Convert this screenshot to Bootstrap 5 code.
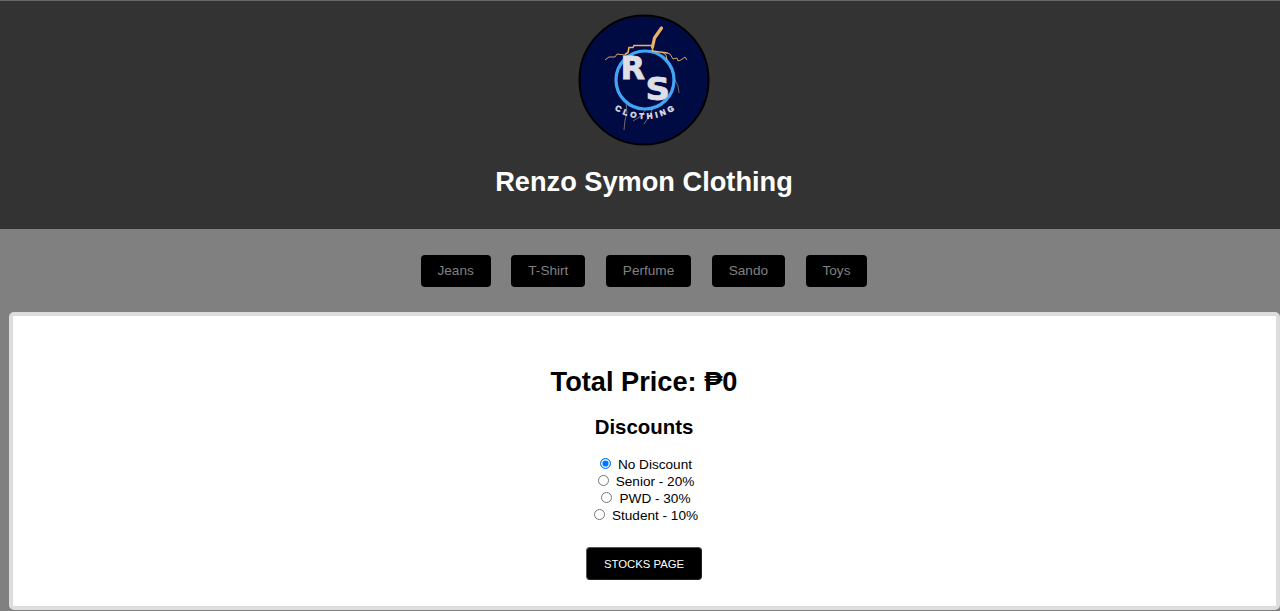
<!DOCTYPE html>
<html lang="en">
<head>
<meta charset="utf-8">
<meta name="viewport" content="width=device-width, initial-scale=1">
<title>Renzo Symon Clothing</title>
<link href="https://cdn.jsdelivr.net/npm/bootstrap@5.3.0/dist/css/bootstrap.min.css" rel="stylesheet">
<style>
body { background: #808080; color: #000; font-family: "Liberation Sans", Arial, sans-serif; font-size: 13.6px; line-height: 17px; }
.shop-header { background: #333; height: 229px; padding: 13px 0 0 8px; border-top: 1px solid #686868; }
.logo { width: 132px; height: 132px; }
.shop-title { font-size: 27.2px; line-height: 32px; margin: 20px 0 0; font-weight: 700; color: #fff; }
.shop-nav { padding: 26px 0 25px 8px; gap: 20.5px; }
.shop-nav .btn { --bs-btn-bg: #000; --bs-btn-color: #808080; --bs-btn-hover-bg: #222; --bs-btn-hover-color: #aaa; --bs-btn-border-width: 0; --bs-btn-border-radius: 4px; --bs-btn-font-size: 13.6px; --bs-btn-padding-x: 17px; --bs-btn-padding-y: 0; line-height: 32px; }
.panel { margin-left: 9px; height: 298px; background: #fff; border: 4px solid #ddd; border-radius: 5px; padding: 50px 1px 0 0; }
.total { font-size: 27.2px; line-height: 32px; font-weight: 700; margin: 0; }
.discounts { font-size: 20.4px; line-height: 24px; font-weight: 700; margin: 17px 0 17px; }
.choice { height: 17px; gap: 7px; padding-left: 4px; }
.choice .form-check-input { width: 11px; height: 11px; margin: 0 0 2px; border-color: #767676; background-image: none; }
.choice .form-check-input:checked { border-color: #0075ff; background: #0075ff; box-shadow: inset 0 0 0 1.4px #fff; }
.stocks { --bs-btn-bg: #000; --bs-btn-color: #fff; --bs-btn-hover-bg: #222; --bs-btn-hover-color: #fff; --bs-btn-border-radius: 4px; --bs-btn-font-size: 11.33px; --bs-btn-padding-x: 0; --bs-btn-padding-y: 0; width: 116px; height: 33px; margin-top: 23px; border-color: #555 #222 #222 #555; line-height: 30px; }
</style>
</head>
<body class="overflow-hidden">
<header class="shop-header d-flex flex-column align-items-center">
  <svg class="logo" viewBox="0 0 132 132" role="img" aria-label="RS Clothing">
    <circle cx="66" cy="66" r="64.5" fill="#010b43" stroke="#000" stroke-width="2"/>
    <g fill="none" stroke="#8b8178" stroke-width=".8">
      <path d="M48 88l1 11-2 7-1 10M68 95l-5 7-8 5M75 94l-3 7-6 9M97 66l3 6 1 7"/>
    </g>
    <circle cx="67" cy="66" r="29" fill="none" stroke="#44a5f5" stroke-width="3.200"/>
    <g fill="none" stroke="#edb066">
      <path d="M83.500 14l-7 10-2 9" stroke-width="3.200" stroke-linecap="round"/>
      <path d="M74.500 31v6l7 1 8 1M74 31.500H56l-1 2h-4l-1 5-3 2" stroke-width="1.600"/>
      <path d="M47 41l-8-1-2 3h-6l-4 3M89 39l3 1 3 5 4-1 1 3 3-1 4-3 2 3M84 38l4 3 1 5" stroke-width=".9"/>
    </g>
    <g fill="#dedfe6" font-weight="700">
      <g font-family="DejaVu Sans, sans-serif" stroke="#dedfe6" stroke-width=".8">
        <text x="42.500" y="65" font-size="32" textLength="24.500" lengthAdjust="spacingAndGlyphs">R</text>
        <text x="67.500" y="85.500" font-size="32" textLength="24.500" lengthAdjust="spacingAndGlyphs">S</text>
      </g>
      <path id="arc" d="M36.500 95.500Q67 115 99 94.500" fill="none"/>
      <text font-family="Liberation Sans, Arial, sans-serif" font-size="8" stroke="#dedfe6" stroke-width=".5"><textPath href="#arc" textLength="64">CLOTHING</textPath></text>
    </g>
  </svg>
  <h1 class="shop-title">Renzo Symon Clothing</h1>
</header>
<nav class="shop-nav d-flex justify-content-center">
  <a class="btn" href="#">Jeans</a>
  <a class="btn" href="#">T-Shirt</a>
  <a class="btn" href="#">Perfume</a>
  <a class="btn" href="#">Sando</a>
  <a class="btn" href="#">Toys</a>
</nav>
<main class="panel d-flex flex-column align-items-center">
  <h2 class="total">Total Price: ₱0</h2>
  <h3 class="discounts">Discounts</h3>
  <label class="choice d-flex align-items-center"><input class="form-check-input" type="radio" name="discount" checked>No Discount</label>
  <label class="choice d-flex align-items-center"><input class="form-check-input" type="radio" name="discount">Senior - 20%</label>
  <label class="choice d-flex align-items-center"><input class="form-check-input" type="radio" name="discount">PWD - 30%</label>
  <label class="choice d-flex align-items-center"><input class="form-check-input" type="radio" name="discount">Student - 10%</label>
  <button class="btn stocks" type="button">STOCKS PAGE</button>
</main>
<script src="https://cdn.jsdelivr.net/npm/bootstrap@5.3.0/dist/js/bootstrap.bundle.min.js"></script>
</body>
</html>
